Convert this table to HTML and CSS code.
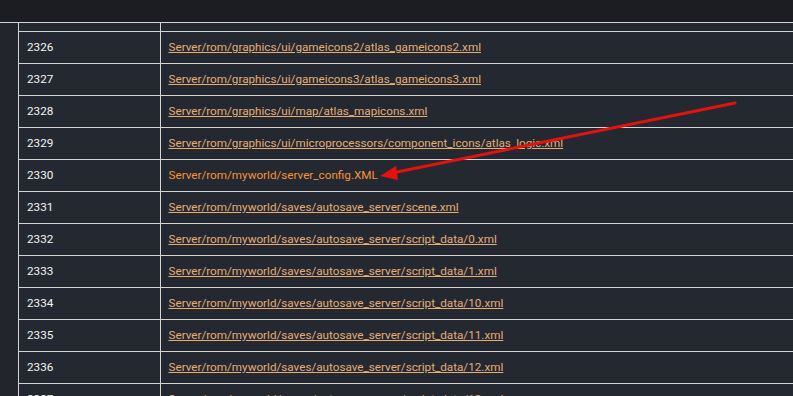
FILE: index.html
```html
<!DOCTYPE html>
<html>
<head>
<meta charset="utf-8">
<link rel="stylesheet" href="styles.css">
</head>
<body>
<div class="topbar"></div>
<div class="main">
  <div class="strip"></div>
  <table class="files">
    <tr class="partial"><td class="num"></td><td class="path"></td></tr>
    <tr><td class="num">2326</td><td class="path"><a href="#">Server/rom/graphics/ui/gameicons2/atlas_gameicons2.xml</a></td></tr>
    <tr><td class="num">2327</td><td class="path"><a href="#">Server/rom/graphics/ui/gameicons3/atlas_gameicons3.xml</a></td></tr>
    <tr><td class="num">2328</td><td class="path"><a href="#">Server/rom/graphics/ui/map/atlas_mapicons.xml</a></td></tr>
    <tr><td class="num">2329</td><td class="path"><a href="#">Server/rom/graphics/ui/microprocessors/component_icons/atlas_logic.xml</a></td></tr>
    <tr><td class="num">2330</td><td class="path"><a href="#" class="hot">Server/rom/myworld/server_config.XML</a></td></tr>
    <tr><td class="num">2331</td><td class="path"><a href="#">Server/rom/myworld/saves/autosave_server/scene.xml</a></td></tr>
    <tr><td class="num">2332</td><td class="path"><a href="#">Server/rom/myworld/saves/autosave_server/script_data/0.xml</a></td></tr>
    <tr><td class="num">2333</td><td class="path"><a href="#">Server/rom/myworld/saves/autosave_server/script_data/1.xml</a></td></tr>
    <tr><td class="num">2334</td><td class="path"><a href="#">Server/rom/myworld/saves/autosave_server/script_data/10.xml</a></td></tr>
    <tr><td class="num">2335</td><td class="path"><a href="#">Server/rom/myworld/saves/autosave_server/script_data/11.xml</a></td></tr>
    <tr><td class="num">2336</td><td class="path"><a href="#">Server/rom/myworld/saves/autosave_server/script_data/12.xml</a></td></tr>
    <tr><td class="num">2337</td><td class="path"><a href="#">Server/rom/myworld/saves/autosave_server/script_data/13.xml</a></td></tr>
  </table>
</div>
<svg class="arrow" width="793" height="396" viewBox="0 0 793 396">
  <line x1="735" y1="103" x2="392" y2="173" stroke="#e3120f" stroke-width="3" stroke-linecap="round"/>
  <polygon points="380,176 396,166 398,180" fill="#e3120f"/>
</svg>
</body>
</html>
```
FILE: styles.css
```css
html, body {
  margin: 0;
  padding: 0;
  height: 396px;
  overflow: hidden;
  background: #23262d;
  font-family: Roboto, "Liberation Sans", sans-serif;
  font-size: 11.7px;
}
.topbar {
  height: 22px;
  background: #1b1d22;
}
.main {
  display: flex;
  border-top: 1px solid #d4d4d4;
}
.strip {
  width: 18px;
  flex: none;
  background: #22252b;
  border-right: 1px solid #d4d4d4;
}
.files {
  border-collapse: collapse;
  flex: 1;
  background: #242830;
}
.files td {
  border-bottom: 1px solid #d4d4d4;
  height: 32px;
  padding: 0 0 0 8px;
  box-sizing: border-box;
  vertical-align: middle;
}
.files tr.partial td {
  height: 8px;
}
.files td.num {
  width: 141px;
  color: #f4f4f4;
  border-right: 1px solid #d4d4d4;
}
.files td.path a {
  color: #e6ad74;
  text-decoration: underline;
}
.files td.path a.hot {
  color: #f7923a;
  text-decoration: none;
}
.arrow {
  position: absolute;
  left: 0;
  top: 0;
}
```
